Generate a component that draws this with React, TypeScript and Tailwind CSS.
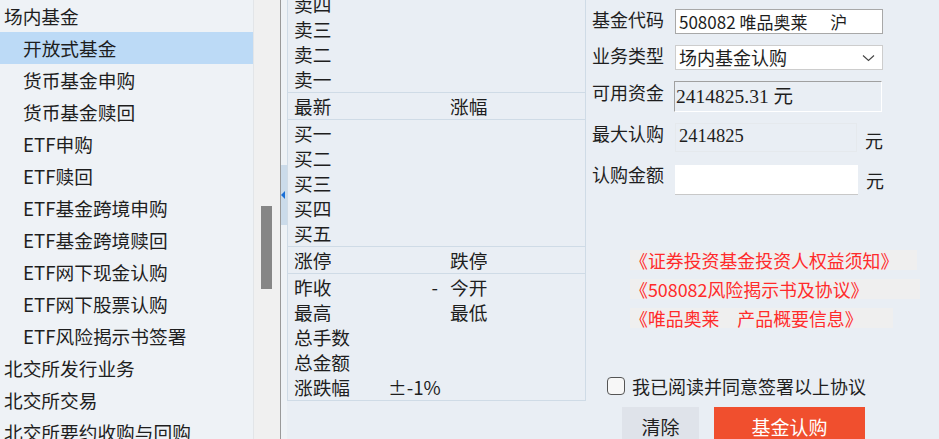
import React from "react";

type NavItem = { label: string; level: 0 | 1; selected?: boolean };

const NAV: NavItem[] = [
  { label: "场内基金", level: 0 },
  { label: "开放式基金", level: 1, selected: true },
  { label: "货币基金申购", level: 1 },
  { label: "货币基金赎回", level: 1 },
  { label: "ETF申购", level: 1 },
  { label: "ETF赎回", level: 1 },
  { label: "ETF基金跨境申购", level: 1 },
  { label: "ETF基金跨境赎回", level: 1 },
  { label: "ETF网下现金认购", level: 1 },
  { label: "ETF网下股票认购", level: 1 },
  { label: "ETF风险揭示书签署", level: 1 },
  { label: "北交所发行业务", level: 0 },
  { label: "北交所交易", level: 0 },
  { label: "北交所要约收购与回购", level: 0 },
];

function Sidebar() {
  return (
    <div className="w-[253px] shrink-0 bg-[#eef2f6] text-[18.7px] text-[#1e1e1e]">
      {NAV.map((item) => (
        <div
          key={item.label}
          className={
            "flex h-[32px] items-center whitespace-nowrap " +
            (item.level === 0 ? "pl-[4px] " : "pl-[23px] ") +
            (item.selected ? "bg-[#bcdaf6]" : "")
          }
        >
          {item.label}
        </div>
      ))}
    </div>
  );
}

function QuoteRow({ a, b, h = "h-[25.2px]", mid }: { a: string; b?: string; h?: string; mid?: React.ReactNode }) {
  return (
    <div className={"flex items-center pl-[6px] " + h}>
      <div className="relative flex w-[156px] items-center">
        <span>{a}</span>
        {mid}
      </div>
      {b && <span>{b}</span>}
    </div>
  );
}

function QuotePanel() {
  return (
    <div className="h-full w-[299px] shrink-0 overflow-hidden text-[18.7px] text-[#1e1e1e]">
      <div className="-mt-[8px] border-x border-b border-[#cfdbe6]">
        {["卖四", "卖三", "卖二", "卖一"].map((s) => (
          <QuoteRow key={s} a={s} h="h-[25px]" />
        ))}
        <div className="border-t border-[#cfdbe6]">
          <QuoteRow a="最新" b="涨幅" h="h-[26px]" />
        </div>
        <div className="border-t border-[#cfdbe6]">
          {["买一", "买二", "买三", "买四", "买五"].map((s) => (
            <QuoteRow key={s} a={s} />
          ))}
        </div>
        <div className="border-t border-[#cfdbe6]">
          <QuoteRow a="涨停" b="跌停" h="h-[26px]" />
        </div>
        <div className="border-t border-[#cfdbe6]">
          <QuoteRow a="昨收" b="今开" mid={<span className="ml-auto pr-[12px]">-</span>} />
          <QuoteRow a="最高" b="最低" />
          <QuoteRow a="总手数" />
          <QuoteRow a="总金额" />
          <QuoteRow a="涨跌幅" mid={<span className="ml-[38px]">±-1%</span>} />
        </div>
      </div>
    </div>
  );
}

function OrderForm() {
  return (
    <div className="flex-1 pl-[6px] text-[18px] text-[#1e1e1e]">
      <div className="mt-[9px] flex items-start">
        <div className="w-[83px] leading-[20px]">基金代码</div>
        <div className="flex h-[25px] w-[208px] items-center whitespace-pre border border-[#a8a8a8] bg-white pl-[3px] text-[17px]">
          {"508082 唯品奥莱      沪"}
        </div>
      </div>
      <div className="mt-[11px] flex items-start">
        <div className="w-[83px] leading-[20px]">业务类型</div>
        <div className="flex h-[25px] w-[208px] items-center justify-between border border-[#cdcdcd] bg-white pl-[3px] pr-[7px]">
          <span>场内基金认购</span>
          <svg width="13" height="8" viewBox="0 0 13 8" fill="none">
            <polyline points="1,1.5 6.5,6.5 12,1.5" stroke="#444" strokeWidth="1.1" />
          </svg>
        </div>
      </div>
      <div className="mt-[11px] flex items-start">
        <div className="w-[82px] pt-[1px] leading-[20px]">可用资金</div>
        <div className="flex h-[31px] w-[208px] items-center border border-b-white border-l-[#a0a0a0] border-r-white border-t-[#a0a0a0] bg-[#e9eef4] pl-[1px] font-['Liberation_Serif','Noto_Sans_CJK_SC',serif] text-[19.5px]">
          2414825.31 元
        </div>
      </div>
      <div className="mt-[11px] flex items-start">
        <div className="w-[83px] leading-[20px]">最大认购</div>
        <div className="h-[29px] w-[182px] border border-[#e5e9ed] pl-[3px] pt-[2px] font-['Liberation_Serif','Noto_Sans_CJK_SC',serif] text-[18.5px] leading-[20px]">
          2414825
        </div>
        <div className="ml-[8px] self-center pt-[4px]">元</div>
      </div>
      <div className="mt-[11px] flex items-start">
        <div className="w-[83px] -mt-[1px] leading-[20px]">认购金额</div>
        <div className="h-[30px] w-[183px] border-b border-[#c8c8c8] bg-white" />
        <div className="ml-[8px] self-center">元</div>
      </div>

      <div className="mt-[55px] flex flex-col gap-[9px] pl-[38px] text-[17.9px] leading-[20px] text-[#ff2b2b]">
        <div className="h-[20px] w-[287px] bg-[#efefef]">《证券投资基金投资人权益须知》</div>
        <div className="h-[20px] w-[290px] bg-[#efefef]">《508082风险揭示书及协议》</div>
        <div className="h-[20px] w-[263px] bg-[#efefef]">《唯品奥莱　产品概要信息》</div>
      </div>

      <div className="mt-[49px] flex items-center pl-[15px]">
        <div className="h-[18px] w-[18px] rounded-[4px] border border-[#555] bg-[#f7f7f7]" />
        <span className="ml-[7px] leading-[18px]">我已阅读并同意签署以上协议</span>
      </div>

      <div className="mt-[12px] flex pl-[30px] text-[19px]">
        <div className="flex h-[40px] w-[77px] items-center justify-center bg-[#dfe3ea]">清除</div>
        <div className="ml-[15px] flex h-[40px] w-[151px] items-center justify-center bg-[#f04f2e] text-white">
          基金认购
        </div>
      </div>
    </div>
  );
}

export default function App() {
  return (
    <div className="flex h-[439px] w-[939px] overflow-hidden bg-[#e9eef4] font-['Noto_Sans_CJK_SC','Noto_Sans',sans-serif]">
      <Sidebar />
      <div className="w-[27px] shrink-0 border-l border-[#e2e5e8] bg-[#f0f0f0] pt-[206px]">
        <div className="ml-[7px] h-[83px] w-[11px] bg-[#868686]" />
      </div>
      <div className="w-[1px] shrink-0 bg-[#999]" />
      <div className="w-[6px] shrink-0 bg-[#eef2f6] pt-[165px]">
        <div className="flex h-[60px] items-center bg-[#cbdbea]">
          <svg width="5" height="8" viewBox="0 0 5 8">
            <polygon points="4,0 0,4 4,8" fill="#1a6fd6" />
          </svg>
        </div>
      </div>
      <QuotePanel />
      <OrderForm />
    </div>
  );
}
